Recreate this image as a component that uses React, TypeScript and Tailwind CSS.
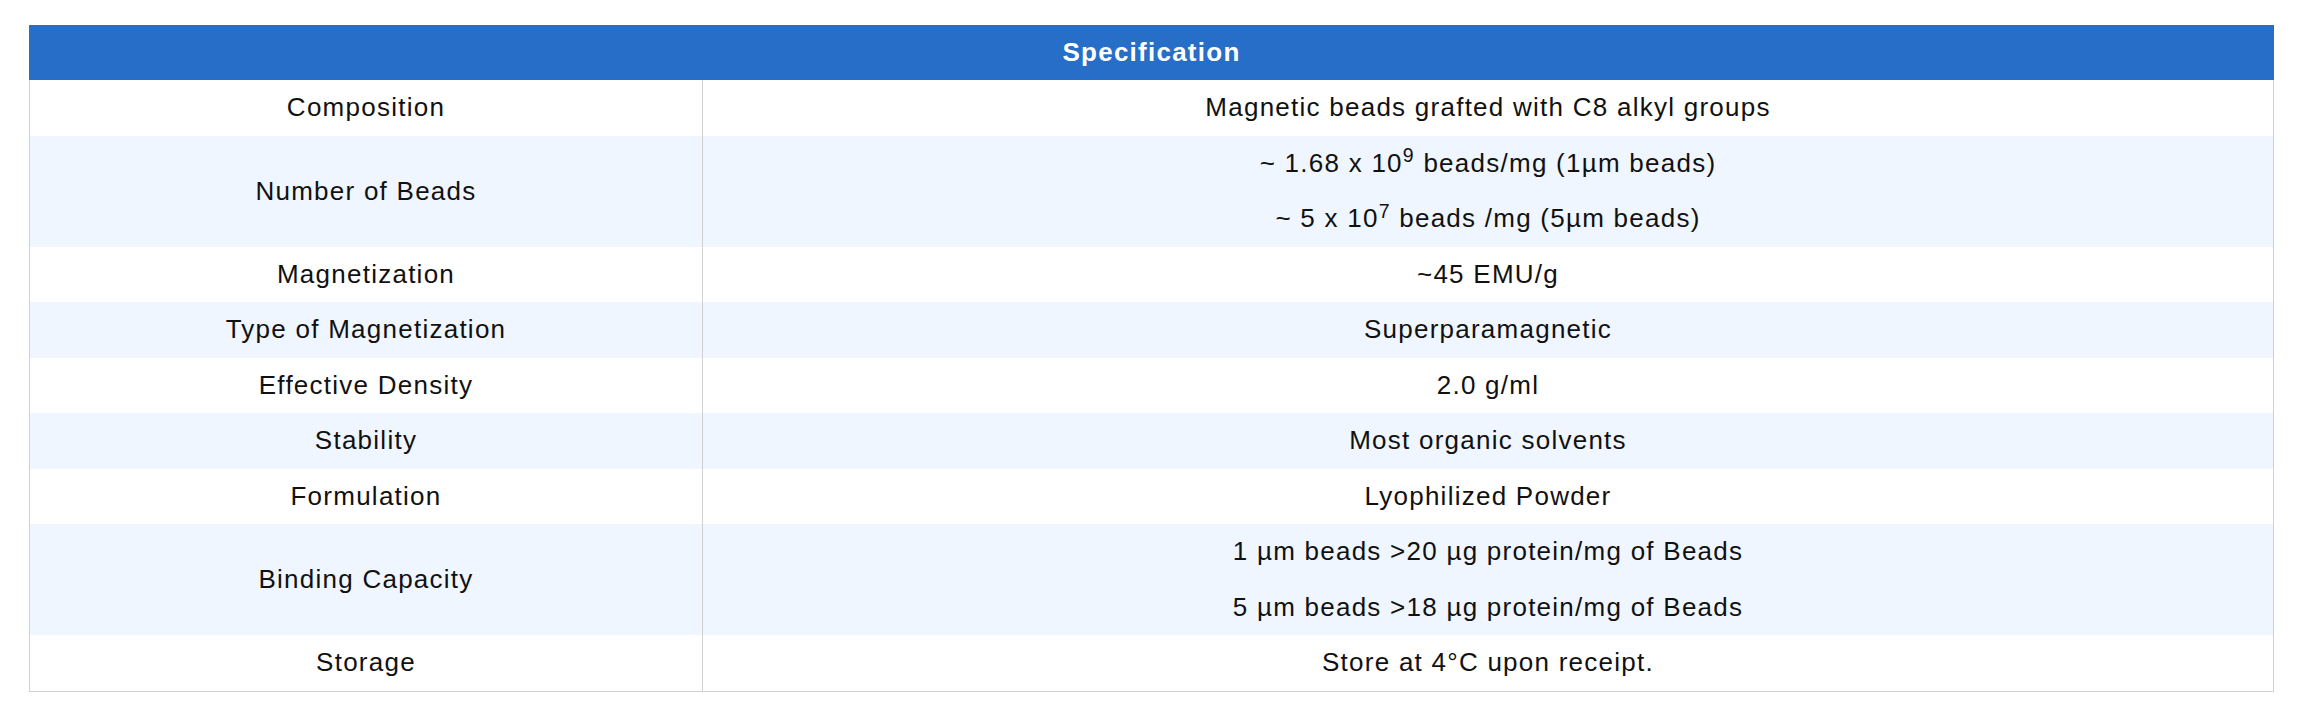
type SpecRow = {
  label: string;
  values: React.ReactNode[];
};

const rows: SpecRow[] = [
  { label: 'Composition', values: ['Magnetic beads grafted with C8 alkyl groups'] },
  {
    label: 'Number of Beads',
    values: [
      <>~ 1.68 x 10<sup>9</sup> beads/mg (1µm beads)</>,
      <>~ 5 x 10<sup>7</sup> beads /mg (5µm beads)</>,
    ],
  },
  { label: 'Magnetization', values: ['~45 EMU/g'] },
  { label: 'Type of Magnetization', values: ['Superparamagnetic'] },
  { label: 'Effective Density', values: ['2.0 g/ml'] },
  { label: 'Stability', values: ['Most organic solvents'] },
  { label: 'Formulation', values: ['Lyophilized Powder'] },
  {
    label: 'Binding Capacity',
    values: ['1 µm beads >20 µg protein/mg of Beads', '5 µm beads >18 µg protein/mg of Beads'],
  },
  { label: 'Storage', values: ['Store at 4°C upon receipt.'] },
];

export default function App() {
  return (
    <div className="min-h-[709px] bg-white pt-[25px] pl-[29px] font-['Liberation_Sans',Arial,sans-serif] text-[26px] tracking-[1.25px] text-[#111]">
      <div className="w-[2245px]">
        {/* header */}
        <div className="flex h-[55px] items-center justify-center bg-[#266ec7] font-bold text-white">
          Specification
        </div>

        <div className="border-x border-b border-[#d0d0d0]">
          {rows.map((row, i) => (
            <div
              key={row.label}
              className={`grid grid-cols-[673px_1fr] ${i % 2 === 1 ? 'bg-[#eff6ff]' : 'bg-white'}`}
            >
              <div className="flex items-center justify-center border-r border-[#d0d0d0]">
                {row.label}
              </div>
              <div className="flex flex-col">
                {row.values.map((v, j) => (
                  <div key={j} className="flex h-[55.5px] items-center justify-center">
                    <span>{v}</span>
                  </div>
                ))}
              </div>
            </div>
          ))}
        </div>
      </div>
    </div>
  );
}
